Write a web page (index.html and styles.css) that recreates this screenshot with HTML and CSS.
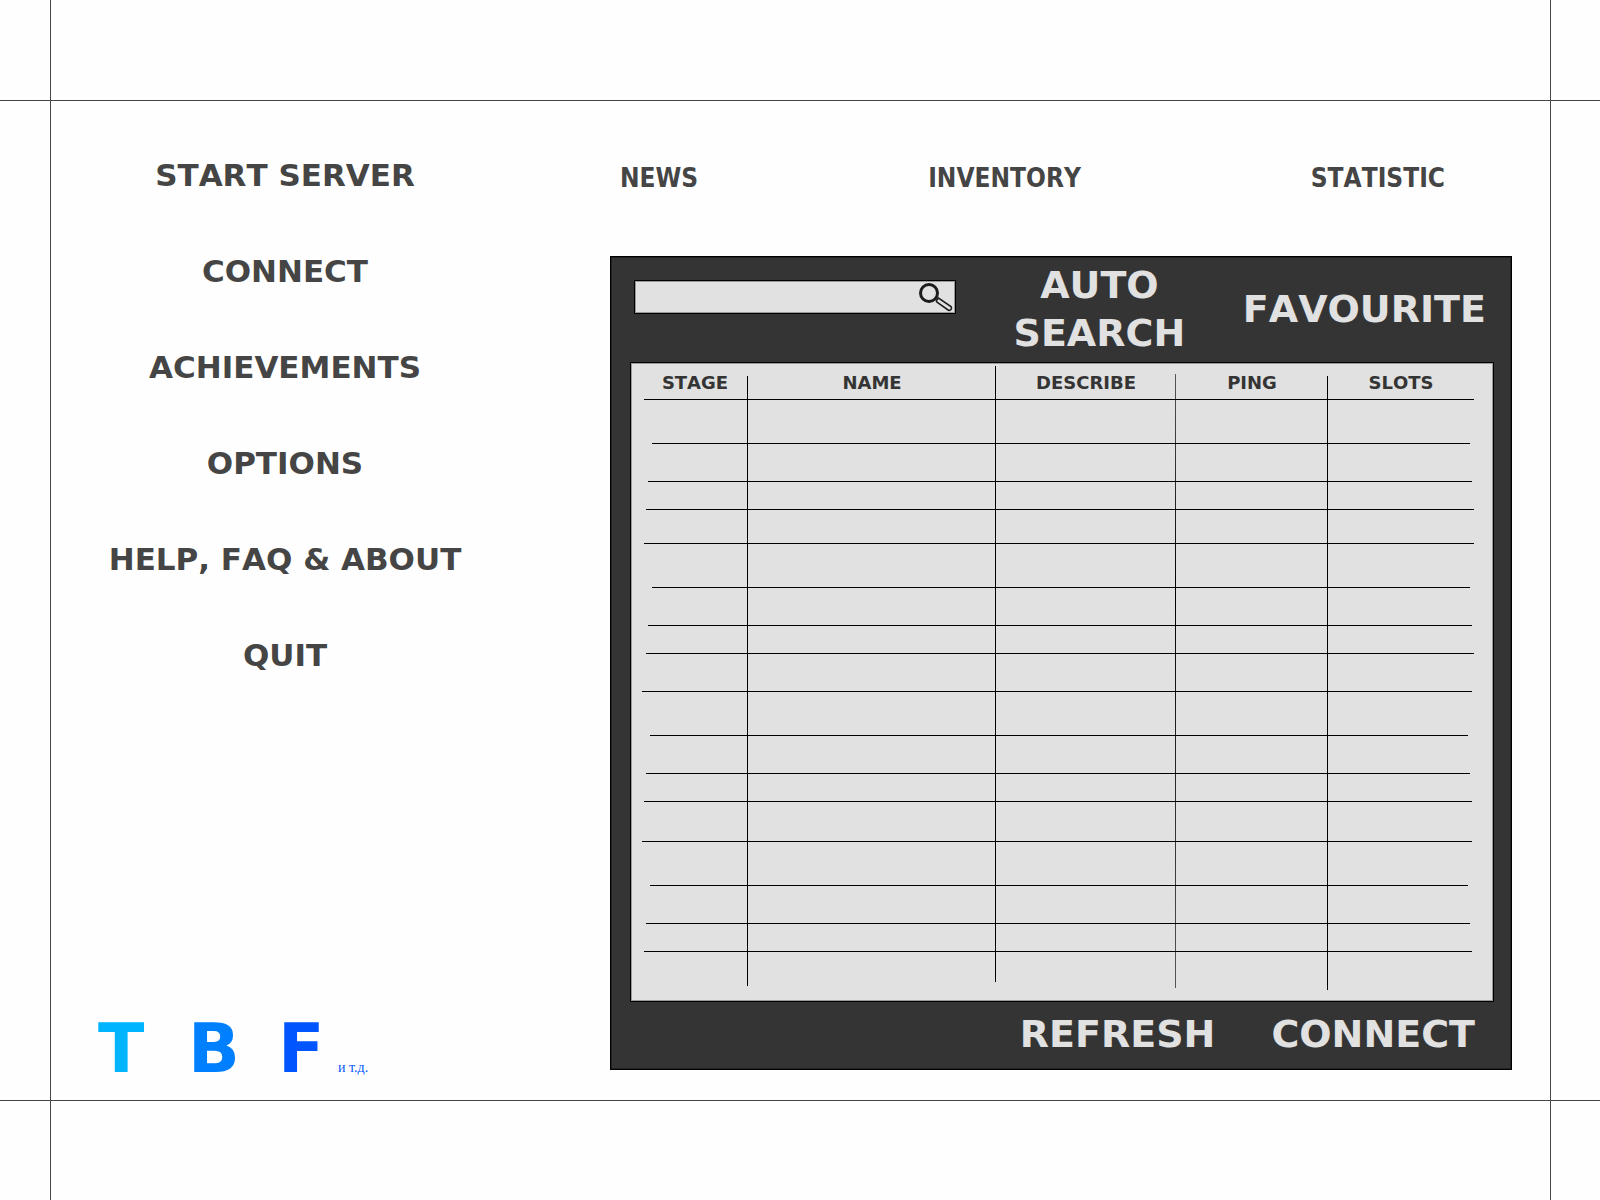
FILE: index.html
```html
<!DOCTYPE html>
<html lang="en">
<head>
<meta charset="utf-8">
<meta name="viewport" content="width=device-width, initial-scale=1">
<title>TBF – Servers</title>
<link rel="stylesheet" href="styles.css">
</head>
<body>
<div class="page">
  <aside class="side">
    <nav class="menu">
      <button type="button">START SERVER</button>
      <button type="button">CONNECT</button>
      <button type="button">ACHIEVEMENTS</button>
      <button type="button">OPTIONS</button>
      <button type="button">HELP, FAQ &amp; ABOUT</button>
      <button type="button">QUIT</button>
    </nav>
    <div class="logo">
      <span class="logo-t">T</span>
      <span class="logo-b">B</span>
      <span class="logo-f">F</span>
      <small>и т.д.</small>
    </div>
  </aside>

  <main class="content">
    <nav class="tabs">
      <a href="#news">NEWS</a>
      <a href="#inventory">INVENTORY</a>
      <a href="#statistic">STATISTIC</a>
    </nav>

    <section class="panel">
      <div class="toolbar">
        <form class="search">
          <input type="text" aria-label="Search servers">
          <button type="button" aria-label="Search">
            <svg width="36" height="30" viewBox="0 0 36 30" fill="none" stroke="#1c1c1c">
              <circle cx="11" cy="11" r="8.5" stroke-width="3"/>
              <path d="M18.5 18.5 L20.5 16 L33 24.6 A2.3 2.3 0 0 1 30.4 28.2 L18.6 19.8 Z" stroke-width="1.6"/>
            </svg>
          </button>
        </form>
        <button type="button" class="action">AUTO<br>SEARCH</button>
        <button type="button" class="action">FAVOURITE</button>
      </div>

      <div class="list">
        <table class="servers">
          <colgroup>
            <col class="c-stage"><col class="c-name"><col class="c-describe"><col class="c-ping"><col class="c-slots">
          </colgroup>
          <thead>
            <tr><th>STAGE</th><th>NAME</th><th>DESCRIBE</th><th>PING</th><th>SLOTS</th></tr>
          </thead>
          <tbody class="g1">
            <tr><td></td><td></td><td></td><td></td><td></td></tr>
            <tr><td></td><td></td><td></td><td></td><td></td></tr>
            <tr><td></td><td></td><td></td><td></td><td></td></tr>
            <tr><td></td><td></td><td></td><td></td><td></td></tr>
          </tbody>
          <tbody class="g2">
            <tr><td></td><td></td><td></td><td></td><td></td></tr>
            <tr><td></td><td></td><td></td><td></td><td></td></tr>
            <tr><td></td><td></td><td></td><td></td><td></td></tr>
            <tr><td></td><td></td><td></td><td></td><td></td></tr>
          </tbody>
          <tbody class="g3">
            <tr><td></td><td></td><td></td><td></td><td></td></tr>
            <tr><td></td><td></td><td></td><td></td><td></td></tr>
            <tr><td></td><td></td><td></td><td></td><td></td></tr>
            <tr><td></td><td></td><td></td><td></td><td></td></tr>
          </tbody>
          <tbody class="g4">
            <tr><td></td><td></td><td></td><td></td><td></td></tr>
            <tr><td></td><td></td><td></td><td></td><td></td></tr>
            <tr><td></td><td></td><td></td><td></td><td></td></tr>
            <tr><td></td><td></td><td></td><td></td><td></td></tr>
          </tbody>
        </table>
      </div>

      <div class="footer">
        <button type="button" class="action">REFRESH</button>
        <button type="button" class="action">CONNECT</button>
      </div>
    </section>
  </main>
</div>
</body>
</html>
```
FILE: styles.css
```css
* { box-sizing: border-box; }

body {
  margin: 0;
  background: #fefefe;
  color: #454545;
  font-family: "DejaVu Sans", sans-serif;
  font-weight: bold;
  font-kerning: none;
}

button {
  margin: 0;
  padding: 0;
  border: 0;
  background: none;
  color: inherit;
  font: inherit;
  font-kerning: inherit;
  white-space: nowrap;
  cursor: pointer;
}

.page {
  position: relative;
  display: grid;
  grid-template-columns: 470fr 902fr;
  column-gap: 90px;
  min-height: 100vh;
  padding: 101px 88px 122px 50px;
}

/* Guide lines of the safe area */
.page::before,
.page::after {
  content: "";
  position: absolute;
  border: 0 solid #454545;
  pointer-events: none;
}
.page::before { inset: 100px 0 99px; border-width: 1px 0; }
.page::after { inset: 0 49px 0 50px; border-width: 0 1px; }

/* Left column */
.side {
  display: flex;
  flex-direction: column;
  justify-content: space-between;
  padding-top: 54px;
}

.menu {
  display: flex;
  flex-direction: column;
  align-items: center;
  gap: 56px;
  font-size: 31px;
  line-height: 40px;
}

.logo {
  display: grid;
  grid-template-columns: 90px 90px 60px auto;
  align-items: baseline;
  padding-left: 48px;
  font-size: 68px;
  line-height: 50px;
}
.logo-t { color: #00b4ff; }
.logo-b { color: #0080ff; }
.logo-f { color: #0055ff; }
.logo small {
  color: #0055ff;
  font: 14px/20px "Liberation Serif", serif;
}

/* Right column */
.content { padding-top: 57px; }

.tabs {
  display: flex;
  justify-content: space-between;
  padding: 0 67px 0 10px;
  margin-bottom: 58px;
  font-family: "DejaVu Sans Condensed", "Liberation Sans", sans-serif;
  font-size: 26px;
  line-height: 40px;
}
.tabs a { color: inherit; text-decoration: none; }

.panel {
  padding: 0 17px 0 19px;
  border: 1px solid #000;
  background: #343434;
  box-shadow: inset 0 0 0 1px #222;
  color: #e1e1e1;
}

.toolbar {
  display: flex;
  justify-content: space-between;
  align-items: center;
  height: 105px;
  padding: 0 8px 2px 4px;
}

.search {
  position: relative;
  align-self: flex-start;
  width: 322px;
  margin-top: 23px;
}
.search input {
  display: block;
  width: 100%;
  height: 34px;
  padding: 0 44px 0 8px;
  border: 1px solid #000;
  border-radius: 0;
  background: #e1e1e1;
  box-shadow: inset 0 0 0 1px #999;
  color: #343434;
  font: 18px "DejaVu Sans", sans-serif;
}
.search button {
  position: absolute;
  top: 2px;
  right: 2px;
  height: 30px;
}
.search svg { display: block; }

.action {
  font-size: 38px;
  line-height: 48px;
}

.list {
  padding: 3px 19px 11px 11px;
  border: 1px solid #000;
  background: #e1e1e1;
  box-shadow: inset 0 0 0 1px #999;
  color: #343434;
}

.servers {
  --ink: linear-gradient(#000, #000);
  width: 100%;
  table-layout: fixed;
  border-collapse: collapse;
}
.servers th {
  height: 33px;
  padding: 0;
  font-size: 18px;
  line-height: 24px;
}
.servers td { padding: 0; }

/* Column rules: each starts and stops at its own height */
.c-stage { width: 106px; background: var(--ink) no-repeat right 0 top 10px / 1px calc(100% - 14px); }
.c-name { background: var(--ink) no-repeat right 0 top 0 / 1px calc(100% - 8px); }
.c-describe {
  width: 180px;
  background: linear-gradient(#555, #000 35%, #555) no-repeat right 0 top 8px / 1px calc(100% - 10px);
}
.c-ping { width: 152px; background: var(--ink) no-repeat right 0 top 10px / 1px calc(100% - 10px); }
.c-slots { width: 146px; }

/* Row rules: drawn along the top of every row, with ragged ends */
.servers tbody tr {
  background: var(--ink) no-repeat var(--start) 0 / calc(100% - var(--start) - var(--end)) 1px;
}
.servers tr:nth-child(1) { --start: 2px; --end: 0px; height: 44px; }
.servers tr:nth-child(2) { --start: 10px; --end: 4px; height: 38px; }
.servers tr:nth-child(3) { --start: 6px; --end: 2px; height: 28px; }
.servers tr:nth-child(4) { --start: 4px; --end: 0px; height: 34px; }
.servers thead tr:nth-child(1) { height: 33px; }
.servers .g3 tr:nth-child(1), .servers .g4 tr:nth-child(1) { --start: 0px; --end: 2px; }
.servers .g3 tr:nth-child(2), .servers .g4 tr:nth-child(2) { --start: 8px; --end: 6px; }
.servers .g3 tr:nth-child(3), .servers .g4 tr:nth-child(3) { --start: 4px; --end: 4px; }
.servers .g3 tr:nth-child(4), .servers .g4 tr:nth-child(4) { --start: 2px; --end: 2px; }
.servers .g2 tr:nth-child(4) { height: 38px; }
.servers .g3 tr:nth-child(4) { height: 40px; }
.servers .g4 tr:nth-child(4) { height: 39px; }

.footer {
  display: flex;
  justify-content: flex-end;
  align-items: center;
  gap: 56px;
  height: 67px;
  padding: 0 19px 4px 0;
}
```
